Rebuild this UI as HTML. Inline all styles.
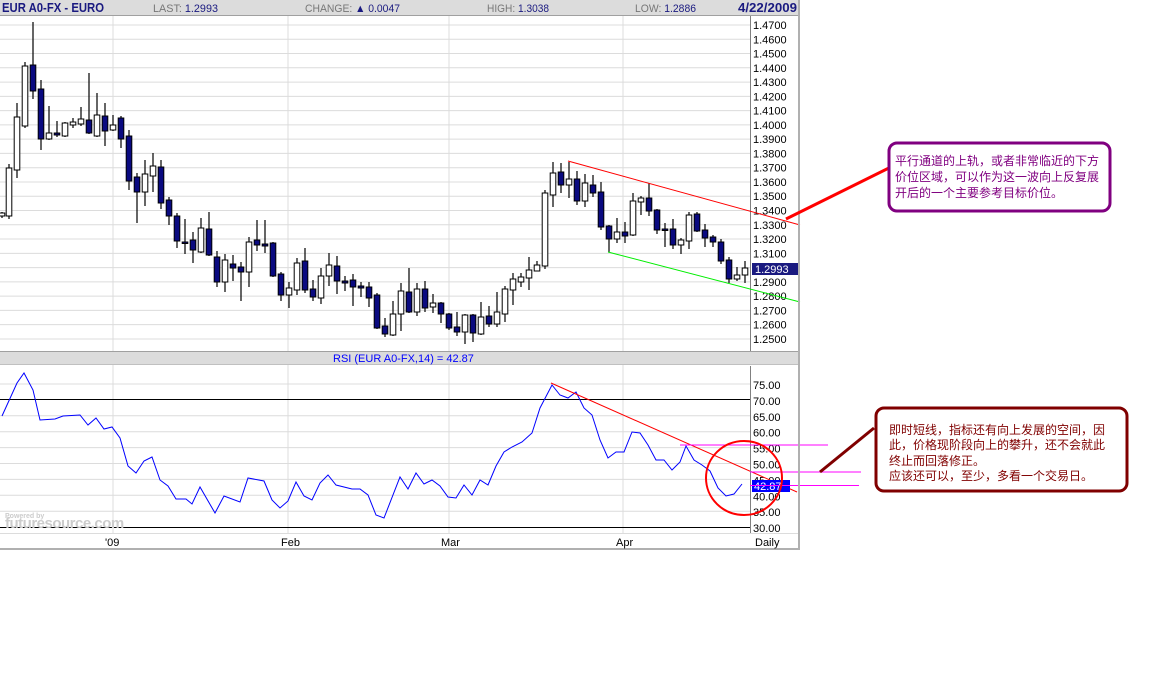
<!DOCTYPE html>
<html><head><meta charset="utf-8"><style>
body{margin:0;width:1149px;height:679px;background:#fff;overflow:hidden;font-family:"Liberation Sans","Noto Sans CJK SC",sans-serif}
svg{position:absolute;left:0;top:0}
.hd{font-size:11px;fill:#777}
.hv{fill:#1a1a80}
.ax{font-size:11px;fill:#000}
.cn{font-size:12px;font-family:"Liberation Sans","WenQuanYi Zen Hei","Noto Sans CJK SC",sans-serif}
</style></head><body>
<svg width="1149" height="679" xmlns="http://www.w3.org/2000/svg">
<rect x="0" y="0" width="800" height="16" fill="#dcdcdc"/>
<line x1="0" y1="15.5" x2="800" y2="15.5" stroke="#a0a0a0"/>
<text x="2" y="12" font-size="13" font-weight="bold" fill="#1a1a80" textLength="102" lengthAdjust="spacingAndGlyphs">EUR A0-FX - EURO</text>
<text x="153" y="12" class="hd" textLength="65" lengthAdjust="spacingAndGlyphs">LAST: <tspan class="hv">1.2993</tspan></text>
<text x="305" y="12" class="hd" textLength="95" lengthAdjust="spacingAndGlyphs">CHANGE: <tspan class="hv">▲ 0.0047</tspan></text>
<text x="487" y="12" class="hd" textLength="62" lengthAdjust="spacingAndGlyphs">HIGH: <tspan class="hv">1.3038</tspan></text>
<text x="635" y="12" class="hd" textLength="61" lengthAdjust="spacingAndGlyphs">LOW: <tspan class="hv">1.2886</tspan></text>
<text x="738" y="12" font-size="13" font-weight="bold" fill="#1a1a80" textLength="59" lengthAdjust="spacingAndGlyphs">4/22/2009</text>
<g id="pg" stroke="#dcdcdc" stroke-width="1"></g>
<g stroke="#dcdcdc"><line x1="113" y1="16" x2="113" y2="533"/><line x1="288" y1="16" x2="288" y2="533"/><line x1="449" y1="16" x2="449" y2="533"/><line x1="623" y1="16" x2="623" y2="533"/></g>
<g id="pl"></g>
<g id="cd"></g>
<line x1="750.5" y1="16" x2="750.5" y2="351" stroke="#808080"/>
<line x1="568" y1="161" x2="800" y2="225" stroke="#ff0000"/>
<line x1="608" y1="252" x2="800" y2="302" stroke="#00ee00"/>
<rect x="752" y="263" width="46" height="12" fill="#1a1a80"/>
<text x="755" y="273" font-size="11" fill="#fff">1.2993</text>
<rect x="0" y="351" width="800" height="14" fill="#dcdcdc"/>
<line x1="0" y1="351.5" x2="800" y2="351.5" stroke="#a0a0a0"/>
<line x1="0" y1="364.5" x2="800" y2="364.5" stroke="#c0c0c0"/>
<text x="333" y="362" font-size="11" fill="#0000ff">RSI (EUR A0-FX,14) = 42.87</text>
<g id="rg" stroke="#dcdcdc"></g>
<line x1="0" y1="399.5" x2="750" y2="399.5" stroke="#000"/>
<line x1="0" y1="527.5" x2="750" y2="527.5" stroke="#000"/>
<g id="rl"></g>
<text x="5" y="518" font-size="7" fill="#ccc" font-weight="bold">Powered by</text>
<text x="5" y="528" font-size="15" fill="#ccc" font-weight="bold" letter-spacing="-0.5">futuresource.com</text>
<polyline id="rsi" fill="none" stroke="#0000ff" stroke-width="1"/>
<line x1="551" y1="383" x2="797" y2="492" stroke="#ff0000"/>
<line x1="750.5" y1="366" x2="750.5" y2="533" stroke="#808080"/>
<line x1="680" y1="445" x2="828" y2="445" stroke="#ff00ff"/>
<line x1="750" y1="472" x2="861" y2="472" stroke="#ff00ff"/>
<rect x="752" y="480" width="38" height="12" fill="#0000ff"/>
<text x="754" y="490" font-size="11" fill="#fff">42.87</text>
<line x1="750" y1="485.5" x2="859" y2="485.5" stroke="#ff00ff"/>
<ellipse cx="744" cy="478" rx="38" ry="37" fill="none" stroke="#ff0000" stroke-width="2"/>
<line x1="0" y1="533.5" x2="800" y2="533.5" stroke="#dcdcdc"/>
<line x1="0" y1="549" x2="800" y2="549" stroke="#b0b0b0" stroke-width="2"/>
<line x1="799" y1="0" x2="799" y2="549" stroke="#b0b0b0" stroke-width="2"/>
<text x="105" y="546" class="ax">'09</text>
<text x="281" y="546" class="ax">Feb</text>
<text x="441" y="546" class="ax">Mar</text>
<text x="616" y="546" class="ax">Apr</text>
<text x="755" y="546" class="ax">Daily</text>
<line x1="786" y1="219" x2="893" y2="166" stroke="#ff0000" stroke-width="3"/>
<rect x="889" y="143" width="221" height="68" rx="8" fill="#fff" stroke="#800080" stroke-width="3"/>
<text class="cn" fill="#800080"><tspan x="895" y="165">平行通道的上轨，或者非常临近的下方</tspan><tspan x="895" y="181">价位区域，可以作为这一波向上反复展</tspan><tspan x="895" y="197">开后的一个主要参考目标价位。</tspan></text>
<line x1="820" y1="472" x2="874" y2="428" stroke="#800000" stroke-width="3"/>
<rect x="876" y="408" width="251" height="83" rx="8" fill="#fff" stroke="#800000" stroke-width="3"/>
<text class="cn" fill="#800000"><tspan x="889" y="434">即时短线，指标还有向上发展的空间，因</tspan><tspan x="889" y="449">此，价格现阶段向上的攀升，还不会就此</tspan><tspan x="889" y="465">终止而回落修正。</tspan><tspan x="889" y="480">应该还可以，至少，多看一个交易日。</tspan></text>
</svg>
<script>
var NS="http://www.w3.org/2000/svg";
function el(p,t,a){var e=document.createElementNS(NS,t);for(var k in a)e.setAttribute(k,a[k]);document.getElementById(p).appendChild(e);return e;}
for(var i=0;i<=22;i++){var y=25+i*14.27;el("pg","line",{x1:0,y1:y,x2:750,y2:y});var t=el("pl","text",{x:753,y:y+4,"font-size":11});t.textContent=(1.47-i*0.01).toFixed(4);}
for(var i=0;i<10;i++){var y=384+i*15.9;if(i!=1&&i!=9)el("rg","line",{x1:0,y1:y,x2:750,y2:y});var t=el("rl","text",{x:753,y:y+5,"font-size":11});t.textContent=(75-i*5).toFixed(2);}
var C=[[2,213,216,0,212,218],[9,168,216,0,164,219],[17,117,170,0,103,178],[25,66,126,0,62,128],[33,65,91,1,22,99],[41,89,139,1,80,150],[49,133,139,0,106,140],[57,133,135,1,121,137],[65,123,136,0,122,137],[73,122,125,0,118,128],[81,119,124,0,107,126],[89,120,133,1,73,134],[97,115,136,0,93,137],[105,116,131,1,103,146],[113,125,130,0,115,131],[121,118,139,1,116,148],[129,136,181,1,130,190],[137,177,192,1,173,223],[145,174,192,0,160,206],[153,166,176,0,153,192],[161,167,203,1,160,209],[169,200,216,1,197,225],[177,216,241,1,213,248],[185,242,243,1,219,254],[193,240,250,1,232,263],[201,228,252,0,218,253],[209,229,255,1,212,256],[217,257,282,1,251,287],[225,260,282,0,254,292],[233,264,268,1,255,281],[241,267,272,1,262,301],[249,242,272,0,237,287],[257,240,245,1,220,251],[265,244,246,1,220,253],[273,243,276,1,242,277],[281,274,295,1,272,301],[289,288,295,0,282,308],[297,263,290,0,258,295],[305,261,290,1,248,293],[313,289,297,1,280,301],[321,276,298,0,268,304],[329,265,276,0,253,286],[337,266,281,1,256,294],[345,281,283,1,276,291],[353,280,287,1,274,306],[361,286,288,1,282,297],[369,287,298,1,282,307],[377,295,328,1,293,329],[385,326,334,1,318,337],[393,314,335,0,301,336],[401,291,314,0,283,331],[409,292,312,1,268,313],[417,289,312,0,283,316],[425,289,308,1,281,312],[433,303,307,0,294,313],[441,303,314,1,302,323],[449,314,328,1,313,330],[457,327,332,1,312,336],[465,315,332,0,314,344],[473,315,333,1,314,342],[481,317,334,0,302,335],[489,316,324,1,306,327],[497,312,324,0,292,327],[505,289,314,0,286,322],[513,279,290,0,273,305],[521,277,282,0,273,287],[529,270,278,0,257,290],[537,265,271,0,261,271],[545,193,266,0,190,269],[553,173,195,0,162,207],[561,172,185,1,163,193],[569,179,185,0,162,198],[577,179,201,1,171,205],[585,183,201,0,174,207],[593,185,193,1,175,197],[601,192,227,1,182,230],[609,226,239,1,225,252],[617,232,239,0,218,243],[625,232,236,1,222,243],[633,201,235,0,193,236],[641,198,202,0,196,215],[649,198,211,1,183,216],[657,210,230,1,209,234],[665,229,230,1,223,247],[673,229,245,1,219,249],[681,240,245,0,238,254],[689,215,241,0,212,249],[697,214,231,1,212,232],[705,230,238,1,224,247],[713,237,242,1,235,247],[721,242,261,1,239,264],[729,260,279,1,257,283],[737,275,279,0,267,281],[745,268,275,0,261,283]];
C.forEach(function(c){el("cd","line",{x1:c[0],y1:c[4],x2:c[0],y2:c[5],stroke:"#000","stroke-width":1.2});
var h=Math.max(c[2]-c[1],1.5);el("cd","rect",{x:c[0]-2.8,y:c[1],width:5.6,height:h,fill:c[3]?"#0a0a80":"#fff",stroke:"#000","stroke-width":1});});
var R=[[2,416],[17,383],[24,373],[33,390],[40,420],[55,419],[63,416],[80,415],[88,425],[96,418],[104,429],[112,427],[120,438],[128,466],[136,473],[144,461],[152,457],[160,480],[168,486],[176,499],[186,499],[192,504],[200,487],[215,513],[224,496],[240,502],[248,478],[264,481],[272,500],[280,508],[288,501],[296,482],[304,496],[312,500],[320,483],[328,475],[336,485],[352,489],[360,489],[368,495],[376,515],[384,518],[400,477],[408,489],[416,473],[424,484],[432,480],[440,486],[448,497],[456,498],[464,485],[472,495],[480,480],[488,485],[496,466],[504,452],[512,447],[522,442],[532,433],[540,408],[552,385],[560,395],[568,398],[576,392],[584,408],[592,415],[600,440],[608,458],[616,452],[624,452],[632,432],[640,433],[648,445],[656,460],[664,460],[672,470],[680,462],[686,446],[694,460],[702,465],[710,471],[718,488],[726,496],[734,494],[742,484]];
document.getElementById("rsi").setAttribute("points",R.map(function(p){return p.join(",")}).join(" "));
</script>
</body></html>
